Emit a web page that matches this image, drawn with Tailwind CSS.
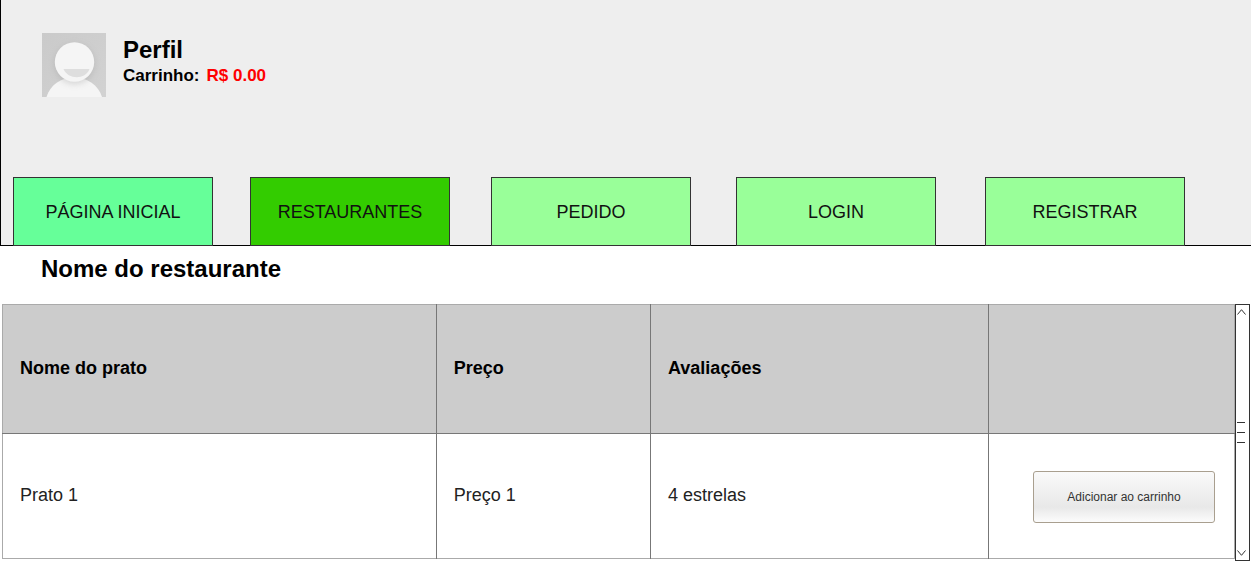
<!DOCTYPE html>
<html lang="pt-BR">
<head>
<meta charset="utf-8">
<meta name="viewport" content="width=device-width, initial-scale=1">
<title>Nome do restaurante</title>
<script src="https://cdn.jsdelivr.net/npm/@tailwindcss/browser@4"></script>
</head>
<body class="min-h-screen bg-white font-['Liberation_Sans',Arial,sans-serif] text-black">
<header class="border-b border-l border-black bg-[#eeeeee]">
  <div class="flex gap-[17px] pt-[33px] pl-[41px]">
    <svg class="size-16 shrink-0" viewBox="0 0 64 64" role="img" aria-label="Foto do perfil">
      <defs>
        <linearGradient id="bg" x1="0" y1="0" x2="1" y2="1"><stop offset="0" stop-color="#cacaca"/><stop offset="1" stop-color="#d2d2d2"/></linearGradient>
        <filter id="shade" x="-40%" y="-40%" width="180%" height="180%"><feGaussianBlur stdDeviation="3"/></filter>
        <clipPath id="frame"><rect width="64" height="64"/></clipPath>
      </defs>
      <g clip-path="url(#frame)">
        <rect width="64" height="64" fill="url(#bg)"/>
        <path d="M4.500 64C8 52 19 44.500 32 44.500S56.500 52 60 64Z" fill="#f5f5f5"/>
        <circle cx="32.500" cy="31" r="20" fill="#999" opacity=".35" filter="url(#shade)"/>
        <circle cx="32.500" cy="29" r="19.700" fill="#f5f5f5"/>
        <path d="M21.500 36H47.500C43.500 47 26 47 21.500 36Z" fill="#dedede"/>
      </g>
    </svg>
    <div>
      <h2 class="pt-[3px] text-2xl leading-7 font-bold">Perfil</h2>
      <p class="flex gap-[7px] pt-0.5 text-[17px] leading-5 font-bold"><span>Carrinho:</span><span class="text-[#ff0000]">R$ 0.00</span></p>
    </div>
  </div>
  <nav class="mt-20 -mb-px flex pl-3 text-lg text-[#111111]" aria-label="Principal">
    <a href="#inicio" class="flex h-[69px] w-[200px] items-center justify-center border border-[#333333] bg-[#66ff99]">PÁGINA INICIAL</a>
    <a href="#restaurantes" aria-current="page" class="ml-[37px] flex h-[69px] w-[200px] items-center justify-center border border-[#333333] bg-[#33cc00]">RESTAURANTES</a>
    <a href="#pedido" class="ml-[41px] flex h-[69px] w-[200px] items-center justify-center border border-[#333333] bg-[#99ff99]">PEDIDO</a>
    <a href="#login" class="ml-[45px] flex h-[69px] w-[200px] items-center justify-center border border-[#333333] bg-[#99ff99]">LOGIN</a>
    <a href="#registrar" class="ml-[49px] flex h-[69px] w-[200px] items-center justify-center border border-[#333333] bg-[#99ff99]">REGISTRAR</a>
  </nav>
</header>
<main>
  <h1 class="pt-[9px] pb-[21px] pl-[41px] text-2xl leading-7 font-bold">Nome do restaurante</h1>
  <div class="flex pr-px pl-0.5">
    <table class="mb-0.5 min-w-0 flex-1 table-fixed border-collapse border border-[#aaaaaa] text-left text-lg">
      <colgroup><col class="w-[35.2%]"><col class="w-[17.4%]"><col class="w-[27.4%]"><col></colgroup>
      <thead>
        <tr class="h-[129px] bg-[#cccccc]">
          <th scope="col" class="border-r border-b border-[#777777] px-[17px] pb-0.5">Nome do prato</th>
          <th scope="col" class="border-r border-b border-[#777777] px-[17px] pb-0.5">Preço</th>
          <th scope="col" class="border-r border-b border-[#777777] px-[17px] pb-0.5">Avaliações</th>
          <th scope="col" class="border-b border-[#777777]" aria-label="Ações"></th>
        </tr>
      </thead>
      <tbody>
        <tr class="h-[125px] text-[#222222]">
          <td class="border-r border-r-[#777777] px-[17px] pb-0.5">Prato 1</td>
          <td class="border-r border-r-[#777777] px-[17px] pb-0.5">Preço 1</td>
          <td class="border-r border-r-[#777777] px-[17px] pb-0.5">4 estrelas</td>
          <td class="pt-0.5 pr-[19px] text-right"><button type="button" class="inline-flex h-[52px] w-[182px] items-center justify-center rounded-[3px] border border-[#a99f8f] bg-linear-to-b from-[#fafafa] via-[#e8e8e8] via-70% to-[#fcfcfc] text-xs text-[#333333]">Adicionar ao carrinho</button></td>
        </tr>
      </tbody>
    </table>
    <div class="flex w-[15px] flex-col items-start justify-between border border-[#333333] bg-white pl-px">
      <button type="button" aria-label="Rolar para cima" class="pt-1"><svg class="block h-1.5 w-[9px]" viewBox="0 0 9 6" fill="none" stroke="#333"><path d="M.500 5.500 4.500 .700 8.500 5.500"/></svg></button>
      <div class="flex flex-col gap-[9px]">
        <span class="h-px w-2 bg-[#333333]"></span>
        <span class="h-px w-2 bg-[#333333]"></span>
        <span class="h-px w-2 bg-[#333333]"></span>
      </div>
      <button type="button" aria-label="Rolar para baixo" class="pb-1"><svg class="block h-1.5 w-[9px]" viewBox="0 0 9 6" fill="none" stroke="#333"><path d="M.500 .500 4.500 5.300 8.500 .500"/></svg></button>
    </div>
  </div>
</main>
</body>
</html>
